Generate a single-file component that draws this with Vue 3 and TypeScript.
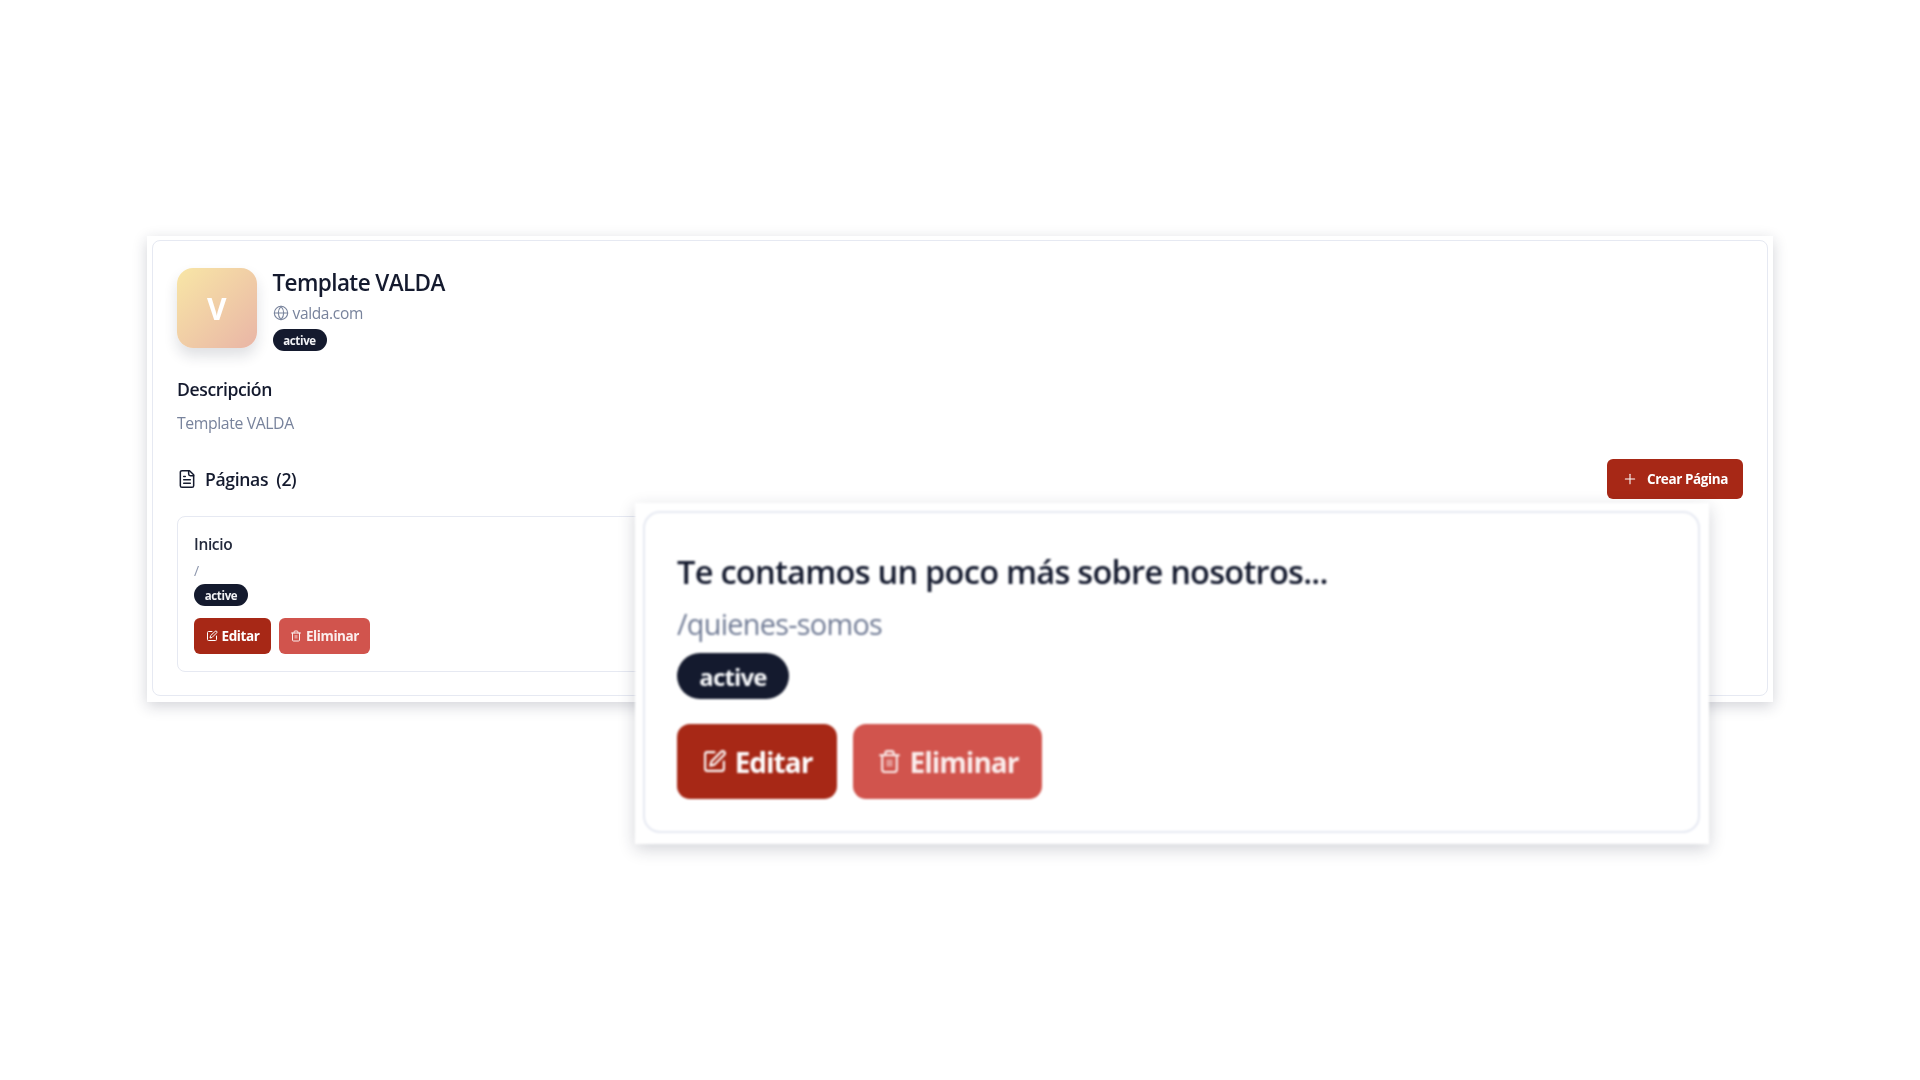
<script setup lang="ts">
const actions = ['Editar', 'Eliminar']
</script>

<template>
  <div class="page">
    <section class="frame">
      <div class="panel">
        <header class="site">
          <div class="avatar">V</div>
          <div class="site-info">
            <h1>Template VALDA</h1>
            <div class="domain">
              <svg viewBox="0 0 24 24" class="ico-globe"><circle cx="12" cy="12" r="10" /><path d="M12 2a14.5 14.5 0 0 0 0 20 14.5 14.5 0 0 0 0-20" /><path d="M2 12h20" /></svg>
              <span>valda.com</span>
            </div>
            <span class="badge">active</span>
          </div>
        </header>

        <h2 class="desc-title">Descripción</h2>
        <p class="desc">Template VALDA</p>

        <div class="pages-head">
          <div class="pages-title">
            <svg viewBox="0 0 24 24" class="ico-file"><path d="M15 2H6a2 2 0 0 0-2 2v16a2 2 0 0 0 2 2h12a2 2 0 0 0 2-2V7Z" /><path d="M14 2v4a2 2 0 0 0 2 2h4" /><path d="M10 9H8" /><path d="M16 13H8" /><path d="M16 17H8" /></svg>
            <span>Páginas</span><span>(2)</span>
          </div>
          <button class="btn create">
            <svg viewBox="0 0 24 24" class="ico-plus"><path d="M5 12h14" /><path d="M12 5v14" /></svg>
            Crear Página
          </button>
        </div>

        <div class="grid">
          <article class="card">
            <h3>Inicio</h3>
            <div class="path">/</div>
            <span class="badge">active</span>
            <div class="actions">
              <button class="btn small edit">
                <svg viewBox="0 0 24 24"><path d="M12 3H5a2 2 0 0 0-2 2v14a2 2 0 0 0 2 2h14a2 2 0 0 0 2-2v-7" /><path d="M18.375 2.625a2.121 2.121 0 1 1 3 3L12 15l-4 1 1-4Z" /></svg>
                {{ actions[0] }}
              </button>
              <button class="btn small del">
                <svg viewBox="0 0 24 24"><path d="M3 6h18" /><path d="M19 6v14a2 2 0 0 1-2 2H7a2 2 0 0 1-2-2V6" /><path d="M8 6V4a2 2 0 0 1 2-2h4a2 2 0 0 1 2 2v2" /><rect x="9" y="10" width="6" height="7" fill="currentColor" opacity=".45" stroke="none" /></svg>
                {{ actions[1] }}
              </button>
            </div>
          </article>
        </div>
      </div>
    </section>

    <aside class="zoomed">
      <article class="zoom-card">
        <h3>Te contamos un poco más sobre nosotros...</h3>
        <div class="zoom-path">/quienes-somos</div>
        <span class="zoom-badge">active</span>
        <div class="zoom-actions">
          <button class="zoom-btn edit">
            <svg viewBox="0 0 24 24"><path d="M12 3H5a2 2 0 0 0-2 2v14a2 2 0 0 0 2 2h14a2 2 0 0 0 2-2v-7" /><path d="M18.375 2.625a2.121 2.121 0 1 1 3 3L12 15l-4 1 1-4Z" /></svg>
            {{ actions[0] }}
          </button>
          <button class="zoom-btn del">
            <svg viewBox="0 0 24 24"><path d="M3 6h18" /><path d="M19 6v14a2 2 0 0 1-2 2H7a2 2 0 0 1-2-2V6" /><path d="M8 6V4a2 2 0 0 1 2-2h4a2 2 0 0 1 2 2v2" /><rect x="9" y="10" width="6" height="7" fill="currentColor" opacity=".45" stroke="none" /></svg>
            {{ actions[1] }}
          </button>
        </div>
      </article>
    </aside>
  </div>
</template>

<style>
html, body { background: #fff; }
</style>

<style scoped>
.page {
  position: relative;
  width: 1920px;
  height: 1080px;
  box-sizing: border-box;
  padding: 236px 147px 0;
  overflow: hidden;
  background: #fff;
  font-family: "Open Sans", "Noto Sans", sans-serif;
  color: #141a2e;
}
svg { fill: none; stroke: currentColor; stroke-width: 2; stroke-linecap: round; stroke-linejoin: round; flex: none; }
h1, h2, h3, p { margin: 0; }
button { font-family: inherit; border: 0; color: #fff; }

.frame {
  height: 466px;
  box-sizing: border-box;
  padding: 4px 5px 6px;
  background: #fff;
  box-shadow: 0 4px 14px rgba(30, 35, 60, .2);
  filter: blur(.7px);
}
.panel {
  height: 100%;
  box-sizing: border-box;
  padding: 27px 24px 0;
  border: 1px solid #e6e9f2;
  border-radius: 8px;
}
.site { display: flex; gap: 16px; }
.avatar {
  width: 79.5px;
  height: 80px;
  border-radius: 16px;
  display: flex;
  align-items: center;
  justify-content: center;
  background: linear-gradient(135deg, #f8e6a6, #e9b5a6);
  box-shadow: 0 8px 14px rgba(30, 35, 60, .14);
  color: #fff;
  font-size: 30px;
  font-weight: 700;
}
.site-info { display: flex; flex-direction: column; align-items: flex-start; }
h1 { font-size: 22.5px; line-height: 30px; font-weight: 600; letter-spacing: -.6px; }
.domain { display: flex; align-items: center; gap: 4px; margin-top: 3px; height: 24px; color: #78839c; font-size: 15.5px; letter-spacing: -.35px; }
.ico-globe { width: 16px; height: 16px; stroke-width: 1.6; }
.badge {
  display: inline-flex;
  align-items: center;
  justify-content: center;
  width: 54px;
  height: 22px;
  margin-top: 4px;
  border-radius: 11px;
  background: #141a2e;
  color: #f2f3f6;
  font-size: 11.5px;
  font-weight: 700;
  letter-spacing: -.35px;
}
.desc-title { margin-top: 25px; font-size: 17.6px; line-height: 26px; font-weight: 600; letter-spacing: -.4px; }
.desc { margin-top: 9px; font-size: 15.8px; line-height: 24px; color: #78839c; letter-spacing: -.4px; }
.pages-head { display: flex; align-items: center; justify-content: space-between; margin-top: 24px; height: 40px; }
.pages-title { display: flex; align-items: center; font-size: 17.6px; font-weight: 600; letter-spacing: -.35px; }
.pages-title span + span { margin-left: 8px; }
.ico-file { width: 20px; height: 20px; margin: 0 8px 0 0; stroke-width: 1.8; }

.btn {
  display: inline-flex;
  align-items: center;
  justify-content: center;
  border-radius: 6px;
  font-weight: 700;
}
.create { width: 136px; height: 40px; gap: 9px; padding: 0; background: #a72816; font-size: 13.5px; letter-spacing: -.4px; }
.ico-plus { width: 16px; height: 16px; stroke-width: 1.6; }

.grid { display: grid; grid-template-columns: repeat(3, 1fr); gap: 16px; margin-top: 17px; }
.card {
  height: 156px;
  box-sizing: border-box;
  padding: 15px 16px 0;
  border: 1px solid #e6e9f2;
  border-radius: 8px;
  display: flex;
  flex-direction: column;
  align-items: flex-start;
}
.card h3 { font-size: 15.5px; line-height: 24px; font-weight: 600; letter-spacing: -.35px; color: #242a3c; }
.path { margin-top: 3px; font-size: 14px; line-height: 24px; color: #8c96ac; }
.card .badge { margin-top: 1px; }
.actions { display: flex; gap: 8px; margin-top: 12px; }
.small { height: 36px; gap: 4px; padding: 0; font-size: 13.5px; letter-spacing: -.4px; }
.small svg { width: 12px; height: 12px; }
.edit { background: #a72816; }
.del { background: #d1544d; color: #fbeeed; }
.small.edit { width: 77px; }
.small.del { width: 91px; }

.zoomed {
  position: absolute;
  left: 635px;
  top: 503px;
  width: 1074px;
  height: 341px;
  box-sizing: border-box;
  padding: 8px 9px 11px 8px;
  background: #fff;
  box-shadow: 0 5px 16px rgba(30, 35, 60, .2);
  filter: blur(.8px);
}
.zoom-card {
  height: 100%;
  box-sizing: border-box;
  padding: 37px 32px 0 32px;
  border: 2px solid #e6e9f2;
  border-radius: 17px;
  display: flex;
  flex-direction: column;
  align-items: flex-start;
}
.zoom-card h3 { font-size: 32.6px; line-height: 44px; font-weight: 600; letter-spacing: -.75px; color: #141a2e; }
.zoom-path { margin-top: 8px; font-size: 28.8px; line-height: 44px; color: #6f7a94; letter-spacing: -.7px; }
.zoom-badge {
  display: inline-flex;
  align-items: center;
  justify-content: center;
  width: 112px;
  height: 46px;
  margin-top: 7px;
  border-radius: 23px;
  background: #141a2e;
  color: #f8f9fb;
  font-size: 24px;
  font-weight: 700;
  letter-spacing: -.85px;
}
.zoom-actions { display: flex; gap: 16px; margin-top: 25px; }
.zoom-btn {
  display: inline-flex;
  align-items: center;
  justify-content: center;
  height: 75px;
  gap: 8px;
  padding: 0;
  border-radius: 13px;
  font-size: 28px;
  font-weight: 700;
  letter-spacing: -1px;
}
.zoom-btn svg { width: 25px; height: 25px; }
.zoom-btn.edit { width: 160px; }
.zoom-btn.del { width: 189px; }
</style>
